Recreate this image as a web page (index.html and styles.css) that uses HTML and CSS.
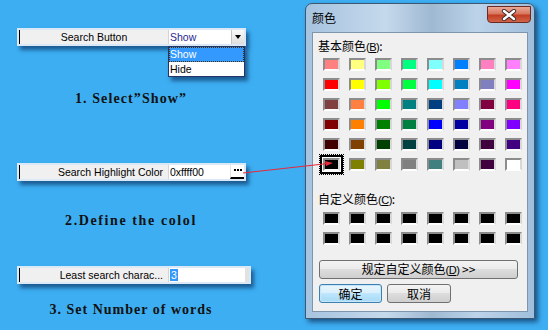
FILE: index.html
```html
<!DOCTYPE html>
<html>
<head>
  <meta charset="utf-8">
  <title>Search settings</title>
  <meta name="viewport" content="width=device-width, initial-scale=1">
  <link rel="stylesheet" href="styles.css">
</head>
<body>
  <div class="page">
    <div class="steps">
      <div class="field">
        <div class="field-label field-label--center">Search Button</div>
        <div class="field-value combo">
          <span class="combo-text">Show</span>
          <span class="combo-btn"></span>
          <ul class="combo-list">
            <li class="combo-item combo-item--on">Show</li>
            <li class="combo-item">Hide</li>
          </ul>
        </div>
      </div>
      <p class="caption caption--one">1. Select”Show”</p>

      <div class="field field--two">
        <div class="field-label">Search Highlight Color</div>
        <div class="field-value">
          <span class="value-text">0xffff00</span>
          <span class="dots-btn"></span>
        </div>
      </div>
      <p class="caption caption--two">2.Define the colol</p>

      <div class="field field--three">
        <div class="field-label">Least search charac...</div>
        <div class="field-value field-value--num">
          <span class="value-text"><span class="num-sel">3</span></span>
        </div>
      </div>
      <p class="caption caption--three">3. Set Number of words</p>
    </div>

    <div class="win">
      <div class="win-title">颜色</div>
      <div class="win-close">
        <svg width="16" height="12" viewBox="0 0 16 12">
          <path d="M3 2 L13 10 M13 2 L3 10" stroke="#3b2b2b" stroke-width="4.2" stroke-linecap="round"/>
          <path d="M3 2 L13 10 M13 2 L3 10" stroke="#fff" stroke-width="2.4" stroke-linecap="round"/>
        </svg>
      </div>
      <div class="win-body">
        <div class="group-label">基本颜色<span class="key">(<u>B</u>)</span>:</div>
        <div class="swatches">
          <span class="sw" style="background:#ff8080"></span>
          <span class="sw" style="background:#ffff80"></span>
          <span class="sw" style="background:#80ff80"></span>
          <span class="sw" style="background:#00ff80"></span>
          <span class="sw" style="background:#80ffff"></span>
          <span class="sw" style="background:#0080ff"></span>
          <span class="sw" style="background:#ff80c0"></span>
          <span class="sw" style="background:#ff80ff"></span>

          <span class="sw" style="background:#ff0000"></span>
          <span class="sw" style="background:#ffff00"></span>
          <span class="sw" style="background:#80ff00"></span>
          <span class="sw" style="background:#00ff40"></span>
          <span class="sw" style="background:#00ffff"></span>
          <span class="sw" style="background:#0080c0"></span>
          <span class="sw" style="background:#8080c0"></span>
          <span class="sw" style="background:#ff00ff"></span>

          <span class="sw" style="background:#804040"></span>
          <span class="sw" style="background:#ff8040"></span>
          <span class="sw" style="background:#00ff00"></span>
          <span class="sw" style="background:#008080"></span>
          <span class="sw" style="background:#004080"></span>
          <span class="sw" style="background:#8080ff"></span>
          <span class="sw" style="background:#800040"></span>
          <span class="sw" style="background:#ff0080"></span>

          <span class="sw" style="background:#800000"></span>
          <span class="sw" style="background:#ff8000"></span>
          <span class="sw" style="background:#008000"></span>
          <span class="sw" style="background:#008040"></span>
          <span class="sw" style="background:#0000ff"></span>
          <span class="sw" style="background:#0000a0"></span>
          <span class="sw" style="background:#800080"></span>
          <span class="sw" style="background:#8000ff"></span>

          <span class="sw" style="background:#400000"></span>
          <span class="sw" style="background:#804000"></span>
          <span class="sw" style="background:#004000"></span>
          <span class="sw" style="background:#004040"></span>
          <span class="sw" style="background:#000080"></span>
          <span class="sw" style="background:#000040"></span>
          <span class="sw" style="background:#400040"></span>
          <span class="sw" style="background:#400080"></span>

          <span class="sw sw--sel" style="background:#000000"></span>
          <span class="sw" style="background:#808000"></span>
          <span class="sw" style="background:#808040"></span>
          <span class="sw" style="background:#808080"></span>
          <span class="sw" style="background:#408080"></span>
          <span class="sw" style="background:#c0c0c0"></span>
          <span class="sw" style="background:#400040"></span>
          <span class="sw" style="background:#ffffff"></span>
        </div>

        <div class="group-label group-label--custom">自定义颜色<span class="key">(<u>C</u>)</span>:</div>
        <div class="swatches swatches--custom">
          <span class="sw"></span><span class="sw"></span><span class="sw"></span><span class="sw"></span>
          <span class="sw"></span><span class="sw"></span><span class="sw"></span><span class="sw"></span>
          <span class="sw"></span><span class="sw"></span><span class="sw"></span><span class="sw"></span>
          <span class="sw"></span><span class="sw"></span><span class="sw"></span><span class="sw"></span>
        </div>

        <button class="btn btn--wide">规定自定义颜色<span class="key">(<u>D</u>)</span> &gt;&gt;</button>
        <div class="btn-row">
          <button class="btn btn--ok">确定</button>
          <button class="btn btn--cancel">取消</button>
        </div>
      </div>
    </div>

    <svg class="pointer" width="548" height="330" viewBox="0 0 548 330">
      <line x1="243" y1="173" x2="328" y2="163.5" stroke="#e8283a" stroke-width="1"/>
      <polygon points="333,163 325,161 326,166" fill="#e8283a"/>
    </svg>
  </div>
</body>
</html>
```

FILE: styles.css
```css
* {
  box-sizing: border-box;
}

body {
  margin: 0;
  background-color: #3daef2;
  font-family: "Liberation Sans", Arial, sans-serif;
}

.page {
  position: relative;
  display: flex;
  width: 548px;
  height: 330px;
  overflow: hidden;
}

/* left: the three property rows */

.steps {
  width: 305px;
  padding-top: 28px;
}

.field {
  display: flex;
  width: 229px;
  height: 18px;
  margin-left: 17px;
  border: 2px solid #dbe8f6;
  background-color: #fff;
  box-shadow: 3px 4px 4px rgba(0, 25, 70, 0.55);
  font-size: 10.5px;
  line-height: 14px;
  color: #000;
}
.field--two {
  margin-top: 56px;
}
.field--three {
  width: 234px;
  margin-top: 37px;
}

.field-label {
  width: 150px;
  padding-right: 5px;
  border-left: 1px solid #000;
  border-right: 1px solid #d4d4d4;
  background-color: #f0f0f0;
  text-align: right;
  white-space: nowrap;
  overflow: hidden;
}
.field-label--center {
  padding-right: 0;
  text-align: center;
}

.field-value {
  position: relative;
  display: flex;
  flex: 1;
  padding-left: 1px;
}
.field-value--num {
  border-right: 4px solid #e2e2e2;
}

.value-text {
  flex: 1;
}

.num-sel {
  padding: 0 1px;
  background-color: #3399ff;
  color: #fff;
}

.combo-text {
  flex: 1;
  color: #2b1f8f;
}

.combo-btn {
  display: flex;
  align-items: center;
  justify-content: center;
  width: 13px;
  border-left: 1px solid #c4c4c4;
  background: linear-gradient(#fafafa, #dedede);
}
.combo-btn:after {
  content: '';
  border-top: 4px solid #000;
  border-left: 3.5px solid transparent;
  border-right: 3.5px solid transparent;
}

.combo-list {
  position: absolute;
  top: 16px;
  left: -1px;
  width: 77px;
  margin: 0;
  padding: 0;
  list-style: none;
  border: 1px solid #233568;
  background-color: #fff;
  box-shadow: 3px 4px 4px rgba(0, 25, 70, 0.55);
}

.combo-item {
  height: 14.5px;
  padding-left: 1px;
  line-height: 14px;
}
.combo-item--on {
  background-color: #3399ff;
  color: #fff;
  outline: 1px dotted #4a3000;
  outline-offset: -1px;
}

.dots-btn {
  position: relative;
  width: 14px;
  border-bottom: 2px solid #000;
  border-left: 1px solid #e4e4e4;
}
.dots-btn:before {
  content: '';
  position: absolute;
  top: 4px;
  left: 3px;
  width: 2px;
  height: 2px;
  background-color: #000;
  box-shadow: 3px 0 #000, 6px 0 #000;
}

.caption {
  width: 262px;
  margin: 45px 0 0;
  text-align: center;
  font: bold 14px/16px "Liberation Serif", "Times New Roman", serif;
  letter-spacing: 1.1px;
  color: #111;
}
.caption--two {
  margin-top: 32px;
  letter-spacing: 1.6px;
}
.caption--three {
  margin-top: 18px;
  letter-spacing: 1px;
}

/* right: the colour dialog */

.win {
  position: relative;
  width: 230px;
  height: 316px;
  margin-top: 3px;
  padding: 0 6px 6px;
  border: 1px solid #3d5873;
  border-radius: 7px 7px 0 0;
  background: linear-gradient(90deg, #a6c3df, #c5d9ec 35%, #9fb9d2 55%, #bcd3e9 75%, #a0bedb);
  box-shadow: 3px 3px 5px rgba(0, 20, 60, 0.6);
  font-family: "Noto Sans CJK SC", sans-serif;
}

.win-title {
  height: 28px;
  line-height: 28px;
  font-size: 12px;
  color: #000;
}

.win-close {
  position: absolute;
  top: 2px;
  right: 3px;
  display: flex;
  align-items: center;
  justify-content: center;
  width: 44px;
  height: 17px;
  border: 1px solid #6b2a22;
  border-radius: 0 0 4px 4px;
  background: linear-gradient(#eba898, #d8775f 45%, #c23e22 55%, #d0654a);
}

.win-body {
  height: 280px;
  padding: 5px 0 0 5px;
  border: 1px solid #7e95ab;
  background-color: #f0f0f0;
  font-size: 12px;
  line-height: 16px;
  color: #000;
}

.group-label {
  height: 16px;
}
.group-label--custom {
  margin-top: 20px;
}

.key {
  font-family: "Liberation Sans", sans-serif;
  font-size: 11px;
  letter-spacing: -0.5px;
}

.swatches {
  display: grid;
  grid-template-columns: repeat(8, 17px);
  grid-auto-rows: 13px;
  column-gap: 9px;
  row-gap: 7px;
  margin: 4px 0 0 5px;
}
.swatches--custom {
  margin-top: 5px;
}

.sw {
  display: block;
  border: 2px solid;
  border-color: #8c8c8c #d8d8d8 #fff #8c8c8c;
  background-color: #000;
}
.sw--sel {
  box-shadow: 0 0 0 1px #fff, 0 0 0 3px #000;
  outline: 1px dotted #000;
  outline-offset: 3px;
}

.btn {
  display: block;
  height: 19px;
  padding: 0;
  border: 1px solid #707070;
  border-radius: 3px;
  background: linear-gradient(#f3f3f3, #ebebeb 45%, #dddddd 50%, #cfcfcf);
  font-family: "Noto Sans CJK SC", sans-serif;
  font-size: 12px;
  line-height: 16px;
  color: #000;
}
.btn--wide {
  width: 199px;
  margin: 15px 0 0 1px;
}

.btn-row {
  display: flex;
  gap: 5px;
  margin: 5px 0 0 1px;
}
.btn--ok {
  width: 63px;
  border-color: #3c7fb1;
  background: linear-gradient(#eaf6fd, #d9f0fc 45%, #bee6fd 50%, #a7d9f5);
  box-shadow: inset 0 0 0 1px #c4e6f8;
}
.btn--cancel {
  width: 64px;
}

.pointer {
  position: absolute;
  top: 0;
  left: 0;
  pointer-events: none;
}
```
